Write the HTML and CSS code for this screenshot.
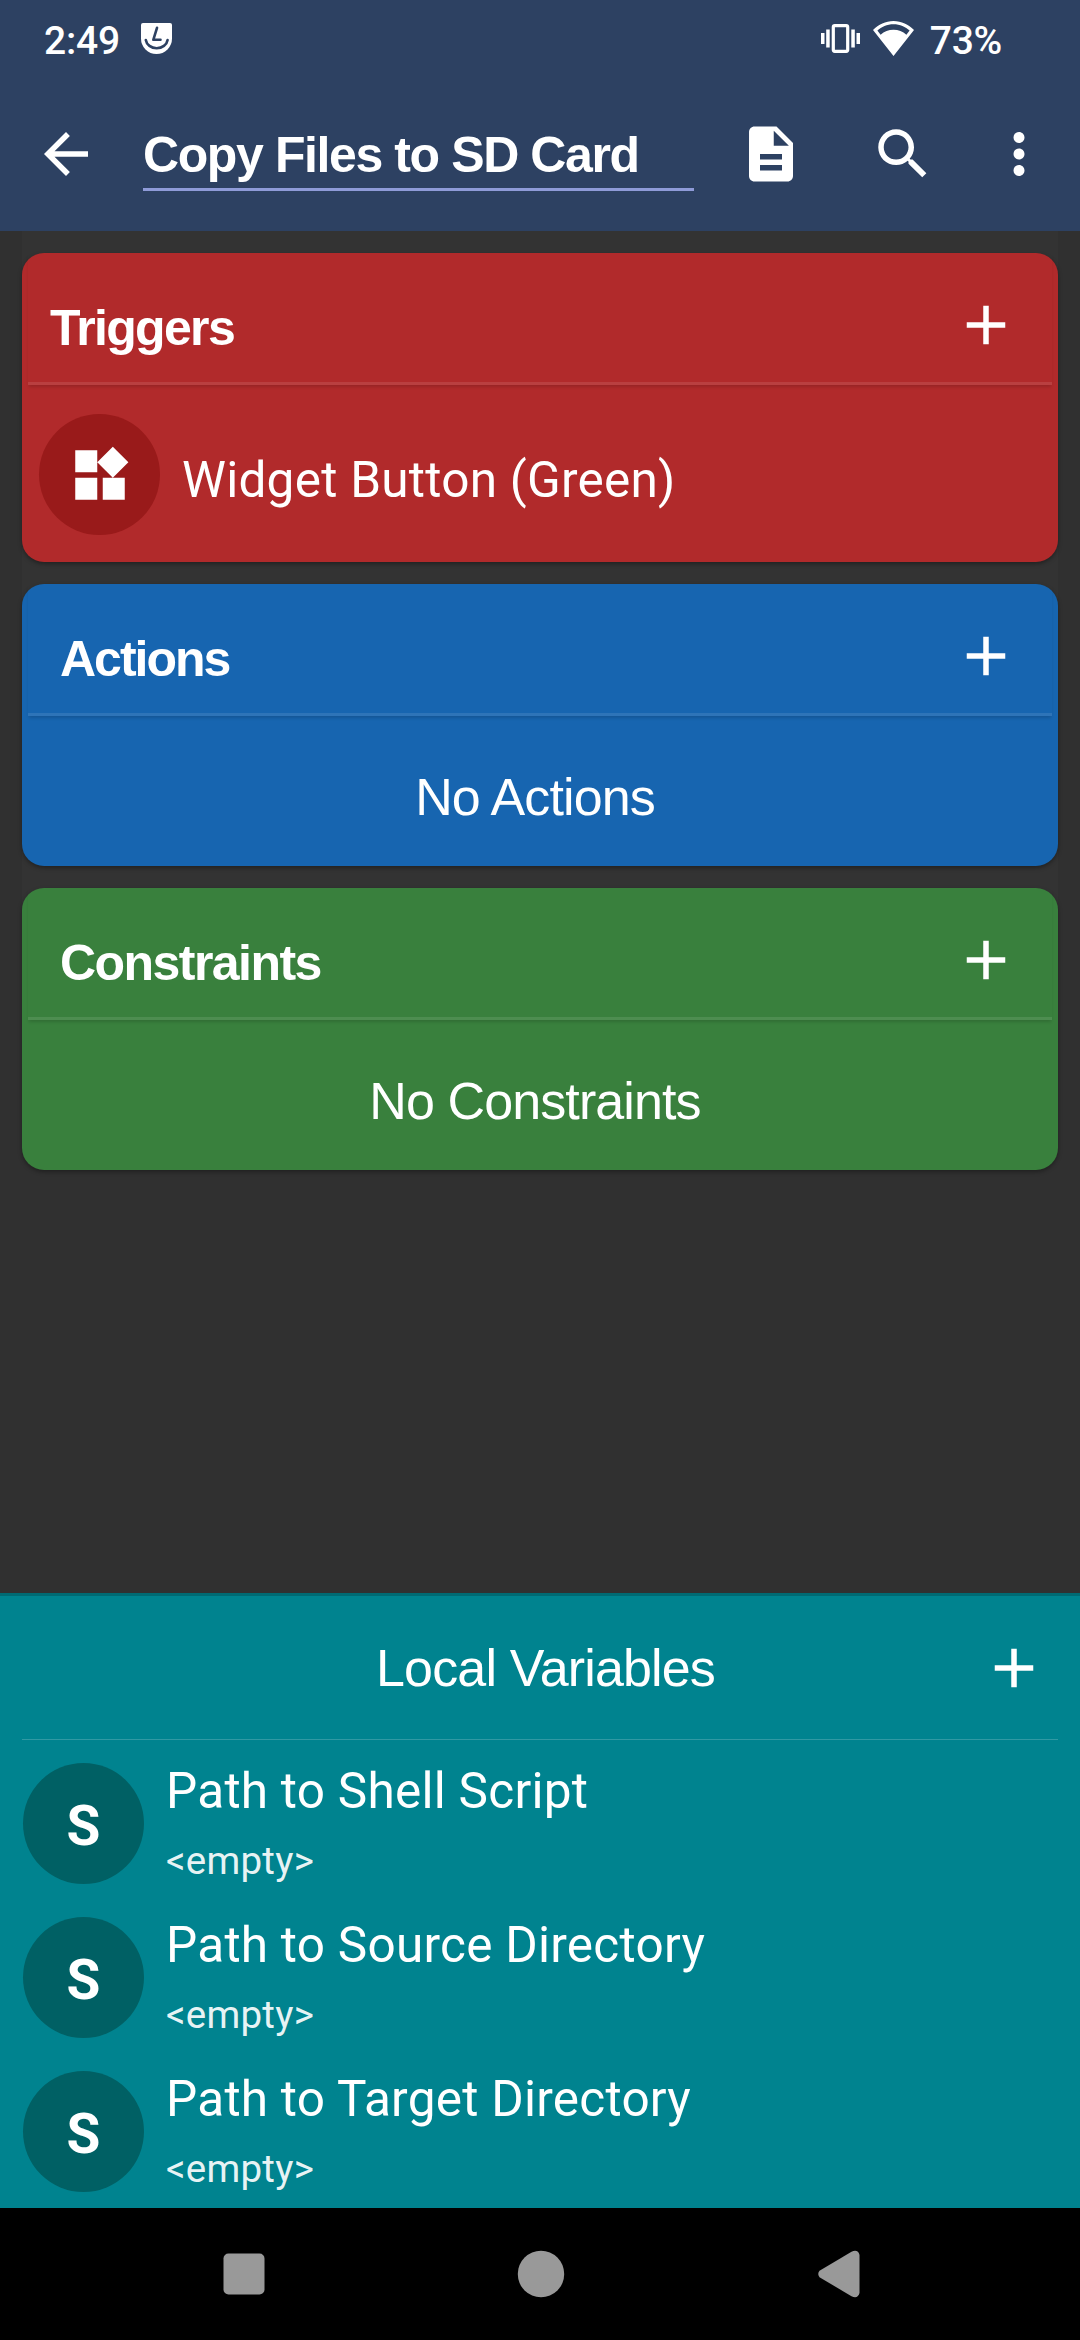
FILE: index.html
```html
<!DOCTYPE html>
<html lang="en">
<head>
<meta charset="utf-8">
<title>Copy Files to SD Card</title>
<link rel="stylesheet" href="styles.css">
</head>
<body>
<svg class="defs" aria-hidden="true">
  <symbol id="plus" viewBox="0 0 24 24"><path d="M19 13h-6v6h-2v-6H5v-2h6V5h2v6h6v2z"/></symbol>
</svg>
<div class="screen">
  <header class="top">
    <div class="status">
      <span class="clock">2:49</span>
      <svg class="face" viewBox="0 0 31 31">
        <path fill="#fff" d="M2 0h27q2 0 2 2v13.500a15.500 15.500 0 0 1-31 0V2q0-2 2-2z"/>
        <path class="face-line" d="M16 4.800 12.300 16.800h7.200M4.800 17a11 9.500 0 0 0 21.800 0"/>
      </svg>
      <svg class="vibrate" viewBox="0 0 39 29">
        <rect x="12.300" y="1.700" width="14.400" height="25.600" rx="1.500" fill="none" stroke="#fff" stroke-width="3.200"/>
        <path fill="#fff" d="M0 9h3.500v11H0zM5.200 5.500h3.500v18H5.200zM30.300 5.500h3.500v18h-3.500zM35.500 9H39v11h-3.500z"/>
      </svg>
      <svg class="wifi" viewBox="0 0 41 35">
        <path fill="#fff" fill-rule="evenodd" d="M20.500 0C12.500 0 5.500 3.500 0 9l20.500 26L41 9C35.500 3.500 28.500 0 20.500 0zM20.500 3.300C27 3.300 32.500 5.800 36.600 9.600L33.400 13.700C29.700 10.500 25.500 8.800 20.500 8.800S11.300 10.500 7.600 13.700L4.400 9.600C8.500 5.800 14 3.300 20.500 3.300z"/>
      </svg>
      <span class="battery">73%</span>
    </div>
    <div class="toolbar">
      <svg class="icon back" viewBox="0 0 24 24"><path d="M20 11H7.830l5.590-5.590L12 4l-8 8 8 8 1.410-1.410L7.830 13H20v-2z"/></svg>
      <div class="title">Copy Files to SD Card</div>
      <svg class="icon doc" viewBox="0 0 24 24"><path d="M14 2H6c-1.100 0-1.990.9-1.990 2L4 20c0 1.100.89 2 1.990 2H18c1.100 0 2-.9 2-2V8l-6-6zm2 16H8v-2h8v2zm0-4H8v-2h8v2zm-3-5V3.500L18.500 9H13z"/></svg>
      <svg class="icon search" viewBox="0 0 24 24"><path d="M15.500 14h-.79l-.28-.27C15.410 12.590 16 11.110 16 9.500 16 5.910 13.090 3 9.500 3S3 5.910 3 9.500 5.910 16 9.500 16c1.610 0 3.090-.59 4.230-1.570l.27.28v.79l5 4.990L20.490 19l-4.990-5zm-6 0C7.010 14 5 11.990 5 9.500S7.010 5 9.500 5 14 7.010 14 9.500 11.990 14 9.500 14z"/></svg>
      <svg class="icon more" viewBox="0 0 24 24"><path d="M12 8c1.100 0 2-.9 2-2s-.9-2-2-2-2 .9-2 2 .9 2 2 2zm0 2c-1.100 0-2 .9-2 2s.9 2 2 2 2-.9 2-2-.9-2-2-2zm0 6c-1.100 0-2 .9-2 2s.9 2 2 2 2-.9 2-2-.9-2-2-2z"/></svg>
    </div>
  </header>

  <main class="cards">
    <section class="card triggers">
      <div class="card-head"><h2 class="heading">Triggers</h2><svg class="icon"><use href="#plus"/></svg></div>
      <div class="trigger">
        <span class="disc"><svg class="icon" viewBox="0 0 24 24"><path d="M13 13v8h8v-8h-8zM3 21h8v-8H3v8zM3 3v8h8V3H3zm13.660-1.310L11 7.340 16.660 13l5.660-5.660-5.660-5.650z"/></svg></span>
        <span class="item">Widget Button (Green)</span>
      </div>
    </section>
    <section class="card actions">
      <div class="card-head"><h2 class="heading">Actions</h2><svg class="icon"><use href="#plus"/></svg></div>
      <div class="none">No Actions</div>
    </section>
    <section class="card constraints">
      <div class="card-head"><h2 class="heading">Constraints</h2><svg class="icon"><use href="#plus"/></svg></div>
      <div class="none">No Constraints</div>
    </section>
  </main>

  <section class="variables">
    <div class="var-head"><h2 class="var-title">Local Variables</h2><svg class="icon"><use href="#plus"/></svg></div>
    <div class="var">
      <span class="disc">S</span>
      <div class="var-text"><div class="item">Path to Shell Script</div><div class="value">&lt;empty&gt;</div></div>
    </div>
    <div class="var">
      <span class="disc">S</span>
      <div class="var-text"><div class="item">Path to Source Directory</div><div class="value">&lt;empty&gt;</div></div>
    </div>
    <div class="var">
      <span class="disc">S</span>
      <div class="var-text"><div class="item">Path to Target Directory</div><div class="value">&lt;empty&gt;</div></div>
    </div>
  </section>

  <nav class="navbar">
    <svg class="nav-icon" viewBox="0 0 48 48"><rect x="3.500" y="3.500" width="41" height="41" rx="5"/></svg>
    <svg class="nav-icon" viewBox="0 0 48 48"><circle cx="24" cy="24" r="23.200"/></svg>
    <svg class="nav-icon" viewBox="0 0 48 48"><path d="M5.500 20.800 37.500 1.700Q44 -1 45.500 5V43Q44 49 37.500 46.300L5.500 27.200Q3 24 5.500 20.800z"/></svg>
  </nav>
</div>
</body>
</html>
```

FILE: styles.css
```css
* { box-sizing: border-box; }
body { margin: 0; background: #303030; color: #fff; font-family: Roboto, sans-serif; }
.defs { position: absolute; width: 0; height: 0; }
.screen { width: 1080px; height: 2340px; display: flex; flex-direction: column; overflow: hidden; }
svg { display: block; flex: none; }
.icon { width: 66px; height: 66px; fill: #fff; }

.top { height: 231px; background: #2d4162; flex: none; }
.status { height: 77px; padding: 0 78px 0 44px; display: flex; align-items: center; font-size: 39px; font-weight: 500; line-height: 82px; }
.clock { width: 96.500px; letter-spacing: -0.2px; padding-top: 4px; }
.face { width: 31px; height: 31px; }
.face-line { fill: none; stroke: #2d4162; stroke-width: 2.600; stroke-linecap: round; stroke-linejoin: round; }
.vibrate { width: 39px; height: 29px; margin-left: auto; }
.wifi { width: 41px; height: 35px; margin-left: 13px; }
.battery { margin-left: 16px; letter-spacing: -0.3px; padding-top: 4px; }
.toolbar { height: 154px; display: flex; align-items: center; padding: 0 28px 0 33px; }
.title { width: 551px; height: 73px; margin: 0 44px; border-bottom: 3px solid #8f9bd8; font: bold 50px/75px "Liberation Sans", Arial, sans-serif; letter-spacing: -1.400px; white-space: nowrap; }
.search { margin-left: 65.500px; }
.more { margin-left: 50.500px; }

.cards { flex: 1; padding: 22px 22px 0; display: flex; flex-direction: column; gap: 22px; background: linear-gradient(#333, #333) 22px 0 / 1036px 700px no-repeat; }
.card { border-radius: 22px; box-shadow: 0 2px 4px rgba(0, 0, 0, 0.350); flex: none; }
.triggers { height: 309px; background: #b12a2b; }
.actions { height: 282px; background: #1765b0; }
.constraints { height: 282px; background: #39803d; }
.card-head { margin: 0 6px; height: 132px; border-bottom: 3px solid rgba(255, 255, 255, 0.100); box-shadow: 0 3px 3px -1px rgba(0, 0, 0, 0.150); display: flex; justify-content: space-between; align-items: center; padding: 15px 33px 0 32px; }
.triggers .card-head { padding-left: 22px; }
.heading { margin: 0; padding-top: 5px; font: bold 50px/60px "Liberation Sans", Arial, sans-serif; }
.triggers .heading { letter-spacing: -1.650px; }
.actions .heading { letter-spacing: -2px; }
.constraints .heading { letter-spacing: -1.550px; }
.none { text-align: center; padding: 51px 10px 0 0; font: 52px/60px "Liberation Sans", Arial, sans-serif; letter-spacing: -0.900px; }
.disc { width: 121px; height: 121px; border-radius: 50%; display: flex; align-items: center; justify-content: center; flex: none; font-size: 55px; font-weight: 700; }
.trigger { display: flex; padding: 29px 0 0 17px; gap: 22px; }
.trigger .disc { background: #991a1a; }
.item { font-size: 49.500px; line-height: 58px; letter-spacing: 0.250px; white-space: nowrap; }
.trigger .item { padding-top: 37px; }

.variables { height: 615px; background: #00838f; border-top: 3px solid #006a73; padding: 0 22px; flex: none; }
.var-head { height: 144px; border-bottom: 1px solid #3099a3; display: flex; align-items: center; margin-bottom: 12px; }
.var-title { flex: 1; margin: 0; padding-left: 88px; text-align: center; font: 52px/60px "Liberation Sans", Arial, sans-serif; letter-spacing: -0.850px; }
.var-head .icon { margin-right: 11px; }
.var { height: 154px; display: flex; padding: 11px 0 0 1px; gap: 22px; }
.var .disc { background: #006064; padding-top: 4px; }
.var-text { margin-top: -1px; }
.value { font-size: 38.500px; line-height: 46px; letter-spacing: 0.250px; color: rgba(255, 255, 255, 0.920); margin-top: 18px; }

.navbar { height: 132px; background: #000; display: flex; align-items: center; justify-content: space-between; padding: 0 218.500px 0 219.500px; flex: none; }
.nav-icon { width: 48px; height: 48px; fill: #999; }
```
